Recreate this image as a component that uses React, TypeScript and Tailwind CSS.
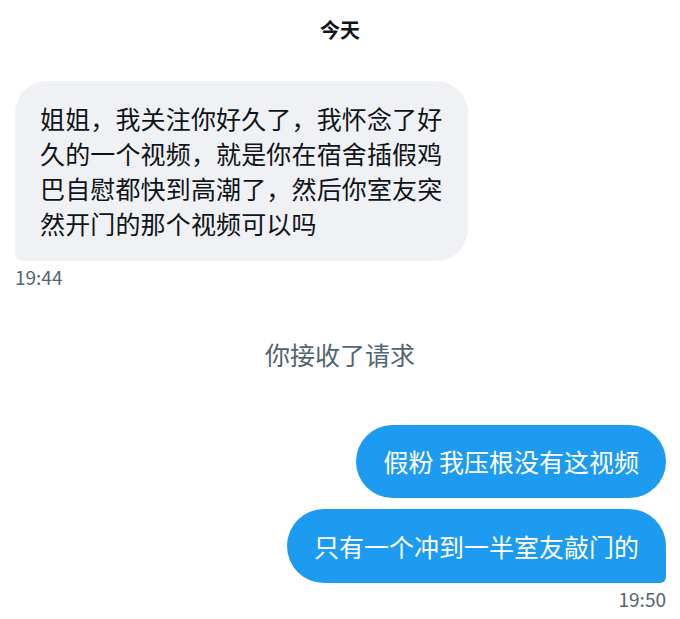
export default function App() {
  return (
    <div
      className="w-[680px] h-[619px] bg-white overflow-hidden text-[#0f1419]"
      style={{ fontFamily: '"Noto Sans CJK SC", "Noto Sans", sans-serif' }}
    >
      {/* Date header */}
      <div className="pt-[15px] text-center text-[20px] leading-[30px] font-semibold">
        今天
      </div>

      {/* Incoming message */}
      <div className="px-[15px] mt-[36px]">
        <div className="w-[453px] bg-[#eff1f4] rounded-[32px] rounded-bl-[8px] pl-[25px] pr-[20px] pt-[20px] pb-[20px] text-[25px] leading-[35px] tracking-[0.15px]">
          姐姐，我关注你好久了，我怀念了好久的一个视频，就是你在宿舍插假鸡巴自慰都快到高潮了，然后你室友突然开门的那个视频可以吗
        </div>
        <div className="mt-[4px] text-[19px] leading-[24px] text-[#536471]">19:44</div>
      </div>

      {/* System notice */}
      <div className="mt-[49px] text-center text-[25px] leading-[32px] text-[#536471]">
        你接收了请求
      </div>

      {/* Outgoing messages */}
      <div className="mt-[55px] px-[14px] flex flex-col items-end gap-[11px]">
        <div className="h-[73px] flex items-center bg-[#1d9bf0] text-white rounded-[37px] pl-[27px] pr-[27px] text-[25px] leading-[35px]">
          假粉 我压根没有这视频
        </div>
        <div className="h-[74px] flex items-center bg-[#1d9bf0] text-white rounded-[37px] rounded-br-[6px] pl-[27px] pr-[27px] text-[25px] leading-[35px]">
          只有一个冲到一半室友敲门的
        </div>
      </div>
      <div className="px-[14px] mt-[4px] text-right text-[19px] leading-[24px] text-[#536471]">19:50</div>
    </div>
  );
}
